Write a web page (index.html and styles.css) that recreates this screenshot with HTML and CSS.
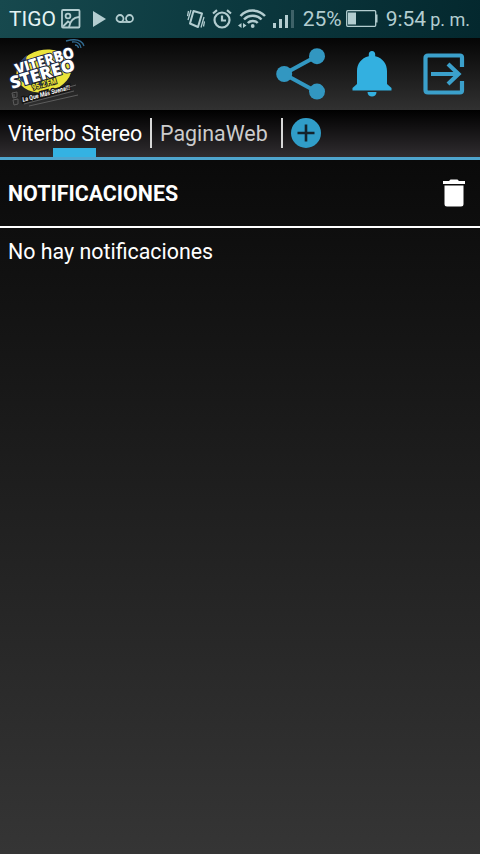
FILE: index.html
```html
<!DOCTYPE html>
<html lang="es">
<head>
<meta charset="UTF-8">
<meta name="viewport" content="width=device-width, initial-scale=1.0">
<title>Viterbo Stereo</title>
<link rel="stylesheet" href="styles.css">
</head>
<body>

<div class="status-bar">
  <span class="carrier">TIGO</span>
  <svg class="icon-image" width="20" height="20" viewBox="0 0 20 20" fill="none" stroke="#b3cdd0" stroke-width="1.8">
    <rect x="1" y="1" width="17.5" height="17.5" rx="1"/>
    <circle cx="7" cy="7" r="2.4"/>
    <path d="M2 17.500L7 12.500L10 14.500M8 18C9 12 13 8.500 18 8"/>
  </svg>
  <svg class="icon-play" width="13" height="16" viewBox="0 0 13 16"><path d="M0 0L13 8L0 16Z" fill="#b3cdd0"/></svg>
  <svg class="icon-voicemail" width="20" height="12" viewBox="0 0 20 12" fill="none" stroke="#b3cdd0" stroke-width="1.8">
    <circle cx="5" cy="5.500" r="3.500"/>
    <circle cx="14.500" cy="5.500" r="3.500"/>
    <path d="M5 9H14.500"/>
  </svg>
  <div class="status-right">
    <svg class="icon-vibrate" width="18" height="20" viewBox="0 0 18 20" fill="none" stroke="#b3cdd0">
      <path d="M6.500 2L15 4.500L11 18L3 14.500Z" stroke-width="2" stroke-linejoin="round"/>
      <path d="M4 1L1 11M1.500 2L.5 7M14 18.500L17 8M16.500 17.500L17.500 12.500" stroke-width="1.300"/>
    </svg>
    <svg class="icon-alarm" width="20" height="20" viewBox="0 0 20 20" fill="none" stroke="#b3cdd0" stroke-width="2.200">
      <circle cx="10" cy="11" r="7.500"/>
      <path d="M10 6.500V11.500H14M1 4.500L5 1.200M19 4.500L15 1.200"/>
    </svg>
    <svg class="icon-wifi" width="29" height="20" viewBox="0 0 29 20" fill="none" stroke="#b3cdd0" stroke-width="2.500">
      <path d="M3.500 7C10 -.2 21.500 -.2 28 7M7 10.500C11.800 5.400 19.700 5.400 24.500 10.500M10.800 14C13.500 11.200 18 11.200 20.700 14"/>
      <circle cx="15.700" cy="17" r="1.900" fill="#b3cdd0" stroke="none"/>
      <path d="M1 16.500L4.500 14V19ZM9.500 16.500L6 14V19Z" fill="#b3cdd0" stroke="none"/>
    </svg>
    <svg class="icon-signal" width="22" height="19" viewBox="0 0 22 19" fill="#b3cdd0">
      <path d="M0 13H3V18H0ZM6 9H9V18H6ZM12 5H15V18H12Z"/>
      <path d="M18 0H21V18H18Z" fill="#3e6268"/>
    </svg>
    <span class="percent">25%</span>
    <svg class="icon-battery" width="32" height="17" viewBox="0 0 32 17">
      <rect x=".7" y=".7" width="29" height="15.600" rx="1" fill="none" stroke="#b3cdd0" stroke-width="1.300"/>
      <path d="M2 2.500H10V14.500H2Z" fill="#b3cdd0"/>
      <path d="M30 4.500H31.500V12.500H30Z" fill="#b3cdd0"/>
    </svg>
    <span class="clock">9:54</span>
    <span class="period">p. m.</span>
  </div>
</div>

<div class="header">
  <svg class="logo" width="78" height="70" viewBox="0 0 78 70">
    <ellipse cx="36" cy="33" rx="28" ry="21" fill="#ebe43a" transform="rotate(-14 36 33)"/>
    <path d="M9 29C12 24 15 20 19 17C15 30 24 45 42 44C32 50 18 48 12 42Z" fill="#2c4478"/>
    <g class="logo-text">
      <text font-size="15.500" textLength="61" lengthAdjust="spacingAndGlyphs" transform="translate(9 37) rotate(-17)">VITERBO</text>
      <text font-size="17" textLength="67" lengthAdjust="spacingAndGlyphs" transform="translate(4 51) rotate(-16.5)">STEREO</text>
    </g>
    <text class="logo-dial" font-size="8" textLength="25" lengthAdjust="spacingAndGlyphs" transform="translate(25 52) rotate(-16)">95.2 FM</text>
    <text class="logo-slogan" font-size="6.500" textLength="49" lengthAdjust="spacingAndGlyphs" transform="translate(15 64) rotate(-15)">La Que Más Suena!!!</text>
    <g class="logo-lines" fill="none" stroke="#5c5c5c" stroke-width="1">
      <path d="M4 55L9 54V59L5 60ZM6 56V60M5 62L10 61V66L6 67ZM16 66L66 53M21 68L70 57M58 50L68 47"/>
    </g>
    <g fill="none" stroke="#326b91" stroke-width="1.300">
      <path d="M67 7Q70 7 70.500 10M64 4Q72 3 73 10M58 3Q73 -1 76 8"/>
    </g>
  </svg>
  <div class="actions">
    <svg class="icon-share" width="50" height="52" viewBox="0 0 50 52" fill="#3297c1">
      <path d="M41 8L8 26L41 44" fill="none" stroke="#3297c1" stroke-width="4"/>
      <circle cx="41" cy="8.200" r="8"/>
      <circle cx="8.200" cy="26" r="8"/>
      <circle cx="41" cy="43.600" r="8"/>
    </svg>
    <svg class="icon-bell" width="40" height="46" viewBox="0 0 40 46" fill="#33b0e0">
      <path d="M20 0C22 0 23.200 1.500 23.200 3.300V5.200C31 7 35 13 35 20V33L39.500 37V39.500H.5V37L5 33V20C5 13 9 7 16.800 5.200V3.300C16.800 1.500 18 0 20 0Z"/>
      <path d="M15.500 41H24.500C24.500 47 15.500 47 15.500 41Z"/>
    </svg>
    <svg class="icon-exit" width="42" height="42" viewBox="0 0 42 42" fill="none" stroke="#3ba0cb" stroke-width="4.200">
      <path d="M39 14V4.500Q39 2.500 37 2.500H5Q2.500 2.500 2.500 5V37Q2.500 39.500 5 39.500H37Q39 39.500 39 37.500V28"/>
      <path d="M8 21H35M25 11L35.500 21L25 31"/>
    </svg>
  </div>
</div>

<div class="tabs">
  <div class="tab active">Viterbo Stereo</div>
  <div class="tab web">PaginaWeb</div>
  <svg class="icon-add" width="30" height="30" viewBox="0 0 30 30">
    <circle cx="15" cy="15" r="15" fill="#309dc8"/>
    <path d="M15 6.500V23.500M6.500 15H23.500" stroke="#13232c" stroke-width="2.600"/>
  </svg>
</div>

<div class="title-bar">
  <h2>NOTIFICACIONES</h2>
  <svg class="icon-trash" width="22" height="28" viewBox="0 0 22 28" fill="#fff">
    <path d="M0 2H6L7.500 .5H14.500L16 2H22V5H0ZM1.500 6.500H20.500V25Q20.500 27.500 18 27.500H4Q1.500 27.500 1.500 25Z"/>
  </svg>
</div>

<p class="message">No hay notificaciones</p>

</body>
</html>
```
FILE: styles.css
```css
* {
  box-sizing: border-box;
}
html {
  height: 100%;
}
body {
  margin: 0;
  height: 100%;
  overflow: hidden;
  font-family: Roboto, sans-serif;
  font-size: 21.4px;
  color: #fff;
  background: linear-gradient(#000, #353535);
}
svg {
  display: block;
  flex-shrink: 0;
}
.status-bar {
  display: flex;
  align-items: center;
  height: 38px;
  padding: 0 10px 0 9px;
  font-size: 21px;
  white-space: nowrap;
  color: #b3cdd0;
  background: linear-gradient(100deg, #17494e, #0b383e 50%, #04282e);
}
.carrier {
  width: 48px;
  color: #e2f3f4;
}
.icon-image {
  margin-left: 4px;
}
.icon-play {
  margin-left: 12px;
}
.icon-voicemail {
  margin-left: 9px;
}
.status-right {
  display: flex;
  align-items: center;
  margin-left: auto;
}
.icon-alarm {
  margin-left: 7px;
}
.icon-wifi {
  margin-left: 5px;
}
.icon-signal {
  margin-left: 7px;
}
.percent {
  margin-left: 8px;
}
.icon-battery {
  margin: 0 0 2px 4px;
}
.clock {
  margin-left: 8px;
}
.period {
  margin-left: 4px;
  padding-top: 1px;
  font-size: 18px;
}
.header {
  display: flex;
  justify-content: space-between;
  height: 72px;
  padding: 0 15px 0 8px;
  background: linear-gradient(#050505, #313131);
}
.logo {
  overflow: visible;
}
.logo-text {
  font-family: "Open Sans", sans-serif;
  font-weight: 800;
  fill: #fff;
  stroke: #18233f;
  stroke-width: 2px;
  paint-order: stroke;
}
.logo-dial {
  font-weight: 900;
  fill: #ebe43a;
  stroke: #222;
  stroke-width: 2px;
  paint-order: stroke;
}
.logo-slogan {
  font-weight: 700;
  font-style: italic;
  fill: #fff;
  stroke: #151515;
  stroke-width: 3px;
  paint-order: stroke;
}
.actions {
  display: flex;
  align-items: center;
}
.icon-bell {
  margin-left: 26px;
}
.icon-exit {
  margin-left: 31px;
}
.tabs {
  display: flex;
  height: 50px;
  border-bottom: 3px solid #4ea5ce;
  background: linear-gradient(#000, #302d30);
}
.tab {
  position: relative;
  width: 152px;
  height: 30px;
  margin-top: 8px;
  padding-left: 8px;
  line-height: 31px;
  white-space: nowrap;
  border-right: 2px solid #d8d8d8;
}
.tab.active {
  letter-spacing: -0.1px;
}
.tab.active::after {
  content: "";
  position: absolute;
  left: 53px;
  top: 30px;
  width: 43px;
  height: 9px;
  background: #34b2e2;
}
.tab.web {
  width: 131px;
  color: #ccc;
}
.icon-add {
  margin: 8px 0 0 8px;
}
.title-bar {
  display: flex;
  align-items: center;
  justify-content: space-between;
  height: 68px;
  padding: 0 15px 0 8px;
  border-bottom: 2px solid #fff;
}
h2 {
  margin: 0;
  font-size: 21.4px;
  font-weight: 700;
}
.message {
  margin: 0;
  padding: 9px 8px;
  line-height: 30px;
}
```
